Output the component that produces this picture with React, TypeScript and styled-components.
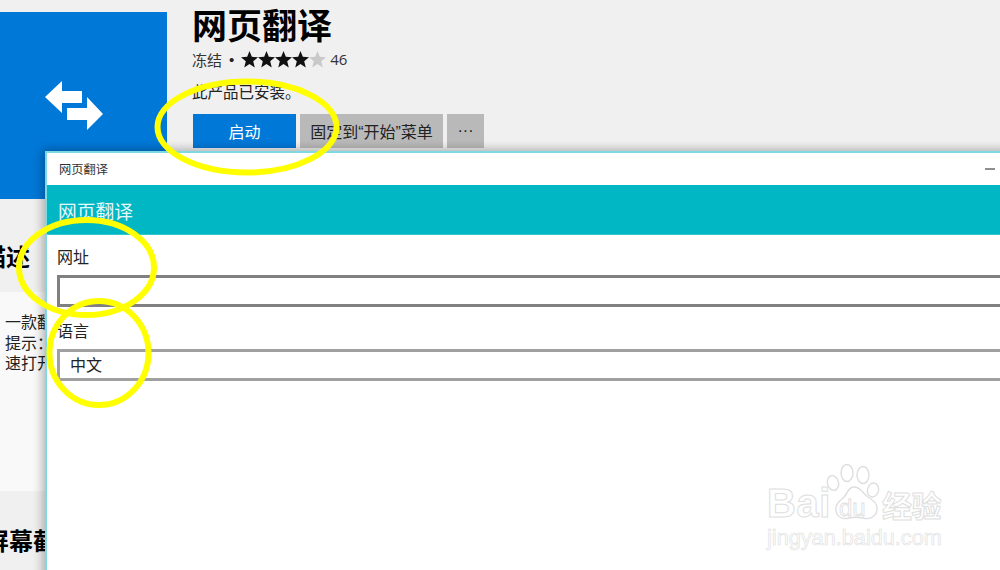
import React from "react";
import styled, { createGlobalStyle } from "styled-components";

const cjk = `"Noto Sans CJK SC", "Liberation Sans", sans-serif`;
const latinFirst = `"Liberation Sans", "Noto Sans CJK SC", sans-serif`;

const Global = createGlobalStyle`
  html, body { margin: 0; padding: 0; width: 1000px; height: 570px; overflow: hidden; background: #f0f0f0; }
  body { font-family: ${cjk}; color: #111; }
  * { box-sizing: border-box; }
`;

const Stage = styled.div`
  position: relative;
  width: 1000px;
  height: 570px;
  overflow: hidden;
  background: #f0f0f0;
`;

const Store = styled.div`
  display: flex;
  flex-direction: column;
  width: 1000px;
  height: 570px;
`;

const Hero = styled.div`
  display: flex;
  height: 199px;
  gap: 25px;
`;

const Tile = styled.div`
  width: 167px;
  height: 187px;
  margin-top: 12px;
  background: #0078d7;
  display: flex;
  align-items: center;
  padding-left: 45px;
`;

const HeroInfo = styled.div`
  display: flex;
  flex-direction: column;
`;

const Title = styled.h1`
  margin: 1px 0 0;
  font-size: 35px;
  line-height: 46px;
  font-weight: 700;
  color: #000;
  white-space: nowrap;
`;

const Meta = styled.div`
  display: flex;
  align-items: center;
  height: 22px;
  margin-top: 1px;
  font-size: 15px;
  color: #333;
  white-space: nowrap;
`;

const Dot = styled.span`
  font-family: "Liberation Sans", sans-serif;
  margin: 0 7px 0 7px;
  color: #222;
`;

const Stars = styled.span`
  display: flex;
  margin-right: 4px;
`;

const Count = styled.span`
  font-family: "Open Sans", "Liberation Sans", sans-serif;
  font-size: 15px;
  color: #333;
`;

const Status = styled.div`
  margin-top: 10px;
  height: 22px;
  font-size: 15.5px;
  line-height: 22px;
  color: #222;
  white-space: nowrap;
`;

const Actions = styled.div`
  display: flex;
  gap: 4px;
  margin-top: 12px;
  margin-left: 1px;
`;

const ActionButton = styled.button<{ $primary?: boolean; $w: number }>`
  width: ${(p) => p.$w}px;
  height: 34px;
  padding: 0;
  border: none;
  background: ${(p) => (p.$primary ? "#0078d7" : "#b9b9b9")};
  color: ${(p) => (p.$primary ? "#fff" : "#222")};
  font-family: ${latinFirst};
  font-size: 16px;
  white-space: nowrap;
`;

const SectionHead = styled.div`
  height: 93px;
  display: flex;
  align-items: flex-start;
  font-size: 24px;
  font-weight: 700;
  color: #000;
`;

const DescHeading = styled.span`
  margin: 38px 0 0 -18px;
  line-height: 38px;
`;

const DescBody = styled.div`
  height: 199px;
  background: #f9f9f9;
  padding: 21px 0 0 5px;
  font-size: 16px;
  line-height: 20.5px;
  color: #222;
  font-family: ${latinFirst};
`;

const ShotHeading = styled.div`
  margin: 32px 0 0 -15px;
  font-size: 24px;
  line-height: 34px;
  font-weight: 700;
  color: #000;
  white-space: nowrap;
`;

const Win = styled.div`
  position: absolute;
  left: 45px;
  top: 151px;
  width: 970px;
  height: 430px;
  background: #fff;
  border: 2px solid #7fd9e2;
  border-right: none;
  box-shadow: -3px 0 10px rgba(0, 0, 0, 0.22), 0 -3px 8px rgba(0, 0, 0, 0.1);
  display: flex;
  flex-direction: column;
`;

const TitleBar = styled.div`
  height: 32px;
  flex: none;
  display: flex;
  align-items: center;
  justify-content: space-between;
  padding: 0 0 0 12px;
  font-size: 12.25px;
  color: #333;
  background: #fff;
`;

const Minimize = styled.span`
  display: block;
  width: 10px;
  height: 2px;
  background: #8f8f8f;
  margin-right: 20px;
`;

const AppBar = styled.div`
  height: 50px;
  flex: none;
  background: #00b7c3;
  color: #e6f8fa;
  font-size: 18.75px;
  line-height: 52px;
  padding-left: 11px;
  border-bottom: 1px solid #35c6cf;
`;

const Form = styled.div`
  display: flex;
  flex-direction: column;
  padding: 9px 0 0 10px;
`;

const FieldLabel = styled.label`
  display: block;
  height: 24px;
  font-size: 16px;
  line-height: 24px;
  color: #222;
`;

const Field = styled.div<{ $tone: string; $gap: number }>`
  height: 32px;
  margin-top: ${(p) => p.$gap}px;
  margin-bottom: 11px;
  border: 3px solid ${(p) => p.$tone};
  background: #fff;
  font-size: 16px;
  line-height: 24px;
  padding-left: 10px;
  color: #222;
`;

const Circles = styled.svg`
  position: absolute;
  inset: 0;
  pointer-events: none;
`;

const Watermark = styled.div`
  position: absolute;
  left: 766px;
  top: 462px;
  width: 200px;
  height: 90px;
  color: #fff;
  pointer-events: none;
`;

const Paw = styled.svg`
  position: absolute;
  left: 59px;
  top: 0;
`;

const WordBai = styled.span`
  position: absolute;
  left: 1px;
  top: 20px;
  font-family: "Liberation Sans", sans-serif;
  font-size: 40px;
  line-height: 42px;
  font-weight: 700;
  letter-spacing: 0.5px;
  -webkit-text-stroke: 1px #dedede;
`;

const WordDu = styled.span`
  position: absolute;
  left: 73px;
  top: 34px;
  font-family: "Liberation Sans", sans-serif;
  font-size: 24px;
  line-height: 24px;
  -webkit-text-stroke: 0.8px #dedede;
`;

const WordCn = styled.span`
  position: absolute;
  left: 116px;
  top: 24px;
  font-size: 30px;
  line-height: 36px;
  letter-spacing: -0.5px;
  font-weight: 700;
  white-space: nowrap;
  -webkit-text-stroke: 1px #dedede;
`;

const WordUrl = styled.span`
  position: absolute;
  left: 1px;
  top: 63px;
  font-family: "Liberation Sans", sans-serif;
  font-size: 21.7px;
  line-height: 26px;
  white-space: nowrap;
  -webkit-text-stroke: 0.7px #e2e2e2;
`;

const Star = ({ on }: { on: boolean }) => (
  <svg width="17" height="17" viewBox="1 1.500 22 22">
    <path
      d="M12 1.5l3 7.6 8 .6-6.200 5.100 2 8-6.800-4.400-6.800 4.400 2-8L1 9.700l8-.6z"
      fill={on ? "#111" : "#c9c9c9"}
    />
  </svg>
);

export default function App() {
  return (
    <Stage>
      <Global />
      <Store>
        <Hero>
          <Tile>
            <svg width="58" height="49" viewBox="45 81 58 49">
              <path d="M45 97 L62 81 V91 H82 V103 H62 V113 Z" fill="#fff" />
              <path d="M103 114 L87 97 V108 H67 V120 H87 V130 Z" fill="#fff" />
            </svg>
          </Tile>
          <HeroInfo>
            <Title>网页翻译</Title>
            <Meta>
              冻结
              <Dot>•</Dot>
              <Stars>
                <Star on />
                <Star on />
                <Star on />
                <Star on />
                <Star on={false} />
              </Stars>
              <Count>46</Count>
            </Meta>
            <Status>此产品已安装。</Status>
            <Actions>
              <ActionButton $primary $w={103}>启动</ActionButton>
              <ActionButton $w={143}>固定到“开始”菜单</ActionButton>
              <ActionButton $w={37}>···</ActionButton>
            </Actions>
          </HeroInfo>
        </Hero>
        <SectionHead>
          <DescHeading>描述</DescHeading>
        </SectionHead>
        <DescBody>
          一款翻译<br />
          提示：<br />
          速打开
        </DescBody>
        <ShotHeading>屏幕截图</ShotHeading>
      </Store>

      <Win>
        <TitleBar>
          网页翻译
          <Minimize />
        </TitleBar>
        <AppBar>网页翻译</AppBar>
        <Form>
          <FieldLabel>网址</FieldLabel>
          <Field $tone="#808080" $gap={7} />
          <FieldLabel>语言</FieldLabel>
          <Field $tone="#a0a0a0" $gap={7}>中文</Field>
        </Form>
      </Win>

      <Watermark>
        <Paw width="62" height="62" viewBox="0 0 62 62" fill="#fff" stroke="#dedede" strokeWidth="1.4">
          <ellipse cx="8" cy="21" rx="5.500" ry="7.500" transform="rotate(-15 8 21)" />
          <ellipse cx="22" cy="11" rx="6" ry="8.500" />
          <ellipse cx="38" cy="13" rx="6" ry="8.500" />
          <ellipse cx="48" cy="28" rx="5.500" ry="7" transform="rotate(15 48 28)" />
          <path d="M29 25c7 0 8 6 14 10 7 4 10 8 9 13-1 7-8 10-14 8-5-1-10-1-14 0-6 2-12-1-13-7-1-5 2-9 6-12 6-4 5-12 12-12z" />
        </Paw>
        <WordBai>Bai</WordBai>
        <WordDu>du</WordDu>
        <WordCn>经验</WordCn>
        <WordUrl>jingyan.baidu.com</WordUrl>
      </Watermark>

      <Circles width="1000" height="570" viewBox="0 0 1000 570" fill="none" stroke="#ffff00" strokeWidth="6">
        <ellipse cx="247" cy="127" rx="89.500" ry="45.500" />
        <ellipse cx="86.500" cy="267.500" rx="67.500" ry="47.500" />
        <ellipse cx="99" cy="353" rx="49.500" ry="52" />
      </Circles>
    </Stage>
  );
}
